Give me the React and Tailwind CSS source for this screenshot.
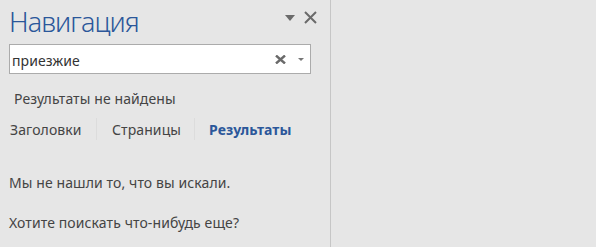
import React from "react";

export default function App() {
  const font = { fontFamily: '"Noto Sans", "Open Sans", sans-serif' };
  return (
    <div className="w-[596px] h-[247px] bg-[#e6e6e6] flex overflow-hidden" style={font}>
      <div className="w-[330px] h-full flex flex-col">
        <div className="flex items-start justify-between pl-[9px] pr-[13px] pt-[3px] h-[44px]">
          <div className="text-[27px] leading-[37px] font-light text-[#2b579a] tracking-[-0.9px]">Навигация</div>
          <div className="flex items-center gap-[9px] pt-[8px]">
            <svg width="10" height="6" viewBox="0 0 10 6"><path d="M0 0 L10 0 L5 6 Z" fill="#6a6a6a" /></svg>
            <svg width="13" height="13" viewBox="0 0 13 13"><path d="M1 1 L12 12 M12 1 L1 12" stroke="#6a6a6a" strokeWidth="2" /></svg>
          </div>
        </div>
        <div className="mx-[9px] w-[302px] h-[30px] bg-white border border-[#ababab] flex items-center pl-[2px] pr-[6px]">
          <span className="flex-1 text-[14px] text-[#333] tracking-[0.1px] pt-[2px]">приезжие</span>
          <svg width="11" height="9" viewBox="0 0 11 9" className="mr-[12px]"><path d="M1 0.5 L10 8.5 M10 0.5 L1 8.5" stroke="#6a6a6a" strokeWidth="2.4" /></svg>
          <svg width="6" height="3" viewBox="0 0 6 3"><path d="M0 0 L6 0 L3 3 Z" fill="#777" /></svg>
        </div>
        <div className="pl-[14px] pt-[15px] text-[14px] leading-[20px] text-[#444] tracking-[0.1px]">Результаты не найдены</div>
        <div className="flex items-center pl-[10px] pt-[11px] h-[29px] text-[14px] text-[#444] tracking-[0.1px]">
          <span className="w-[86px]">Заголовки</span>
          <span className="w-px h-[22px] bg-[#dcdcdc]" />
          <span className="w-[97px] pl-[15px]">Страницы</span>
          <span className="w-px h-[22px] bg-[#dcdcdc]" />
          <span className="pl-[14px] font-bold text-[#2b579a]">Результаты</span>
        </div>
        <div className="pl-[9px] pt-[35px] text-[14px] leading-[20px] text-[#444] tracking-[0.1px]">Мы не нашли то, что вы искали.</div>
        <div className="pl-[9px] pt-[20px] text-[14px] leading-[20px] text-[#444] tracking-[0.1px]">Хотите поискать что-нибудь еще?</div>
      </div>
      <div className="w-px h-full bg-[#c6c6c6]" />
      <div className="flex-1" />
    </div>
  );
}
